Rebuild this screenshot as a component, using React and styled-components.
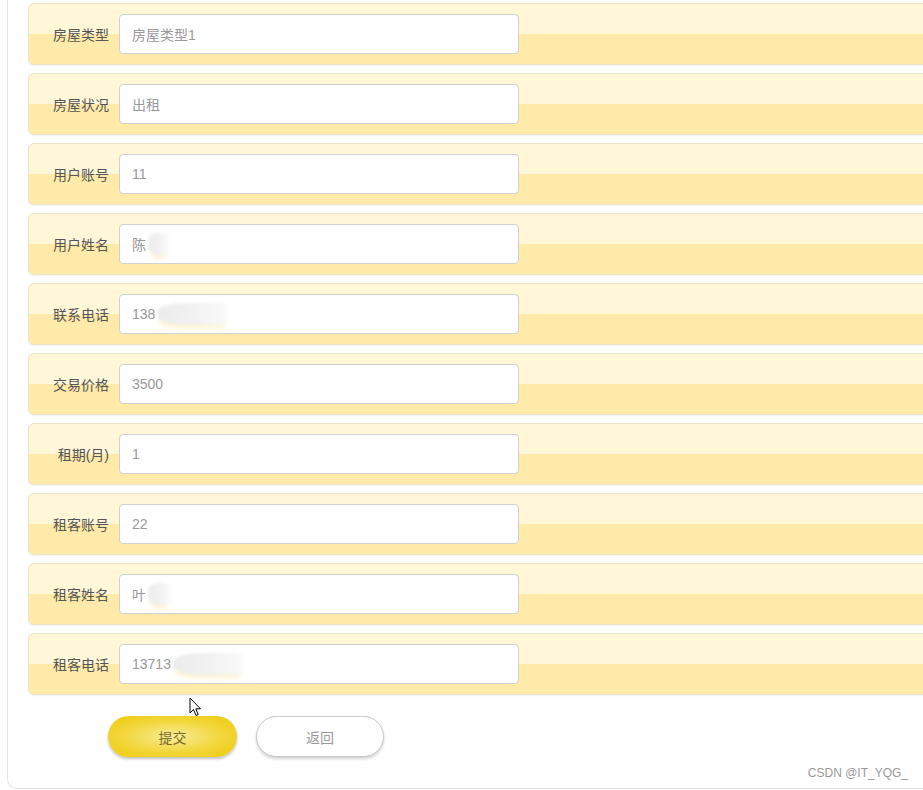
import React from 'react'
import styled, { createGlobalStyle } from 'styled-components'

const GlobalStyle = createGlobalStyle`
  html, body {
    margin: 0;
    padding: 0;
    overflow: hidden;
    background: #fff;
  }
  body {
    font-family: "Liberation Sans", "Noto Sans CJK SC", sans-serif;
  }
`

const Page = styled.div`
  position: relative;
  width: 923px;
  height: 790px;
  overflow: hidden;
`

const Card = styled.div`
  width: 1100px;
  height: 789px;
  margin-left: 7px;
  box-sizing: border-box;
  border: 1px solid #e6e6e6;
  border-top: none;
  border-radius: 0 0 10px 10px;
  padding: 3px 0 0 20px;
`

const Form = styled.div`
  display: flex;
  flex-direction: column;
  gap: 8px;
`

const Row = styled.div`
  display: flex;
  align-items: center;
  height: 62px;
  box-sizing: border-box;
  border: 1px solid #ece4c6;
  border-radius: 6px;
  background: linear-gradient(#fff7d8 0, #fff7d8 50%, #ffeaa9 50%, #ffeaa9 100%);
  box-shadow: 0 1px 2px rgba(0, 0, 0, 0.06);
`

const Label = styled.label`
  width: 80px;
  padding-right: 10px;
  text-align: right;
  font-size: 14px;
  color: #555;
  flex-shrink: 0;
`

const Field = styled.div`
  position: relative;
  width: 400px;
  height: 40px;
  box-sizing: border-box;
  border: 1px solid #cfcfcf;
  border-radius: 4px;
  background: #fff;
  padding-left: 12px;
  display: flex;
  align-items: center;
  font-size: 14px;
  color: #999;
`

const Smudge = styled.span`
  display: inline-block;
  width: ${p => p.w}px;
  height: 22px;
  margin-left: 2px;
  background: linear-gradient(90deg, #ececec, #f2f2f2 60%, #fafafa);
  border-radius: 40% 10% 10% 40%;
  filter: blur(1.5px);
  box-shadow: 0 6px 4px -3px #fff1c8;
`

const Actions = styled.div`
  display: flex;
  gap: 19px;
  margin: 21px 0 0 80px;
`

const Button = styled.button`
  width: ${p => p.w}px;
  height: 41px;
  border-radius: 21px;
  font-family: inherit;
  font-size: 14px;
  cursor: pointer;
  ${p => p.primary ? `
    border: none;
    color: #7a6a2a;
    background: radial-gradient(ellipse at center, #f8ec98 0%, #f2d63a 55%, #eec90a 100%);
    box-shadow: 0 2px 3px rgba(0, 0, 0, 0.25);
  ` : `
    border: 1px solid #c9c9c9;
    color: #999;
    background: #fff;
    box-shadow: 0 2px 3px rgba(0, 0, 0, 0.18);
  `}
`

const Watermark = styled.div`
  position: absolute;
  right: 15px;
  bottom: 10px;
  font-family: "Liberation Sans", Arial, sans-serif;
  font-size: 12px;
  color: #999;
`

const Pointer = styled.svg`
  position: absolute;
  left: 189px;
  top: 697px;
`

const rows = [
  { label: '房屋类型', value: '房屋类型1' },
  { label: '房屋状况', value: '出租' },
  { label: '用户账号', value: '11' },
  { label: '用户姓名', value: '陈', smudge: 20 },
  { label: '联系电话', value: '138', smudge: 70 },
  { label: '交易价格', value: '3500' },
  { label: '租期(月)', value: '1' },
  { label: '租客账号', value: '22' },
  { label: '租客姓名', value: '叶', smudge: 22 },
  { label: '租客电话', value: '13713', smudge: 70 },
]

export default function App() {
  return (
    <Page>
      <GlobalStyle />
      <Card>
        <Form>
          {rows.map((r, i) => (
            <Row key={`row${i}`}>
              <Label>{r.label}</Label>
              <Field>
                {r.value}
                {r.smudge && <Smudge w={r.smudge} />}
              </Field>
            </Row>
          ))}
        </Form>
        <Actions>
          <Button primary w={129}>提交</Button>
          <Button w={128}>返回</Button>
        </Actions>
      </Card>
      <Watermark>CSDN @IT_YQG_</Watermark>
      <Pointer width="14" height="20" viewBox="0 0 14 20">
        <path d="M1 1 L1 16 L4.5 12.5 L7 18.5 L9.2 17.5 L6.8 11.8 L11.5 11.8 Z" fill="#fff" stroke="#000" strokeWidth="1" strokeLinejoin="round" />
      </Pointer>
    </Page>
  )
}
